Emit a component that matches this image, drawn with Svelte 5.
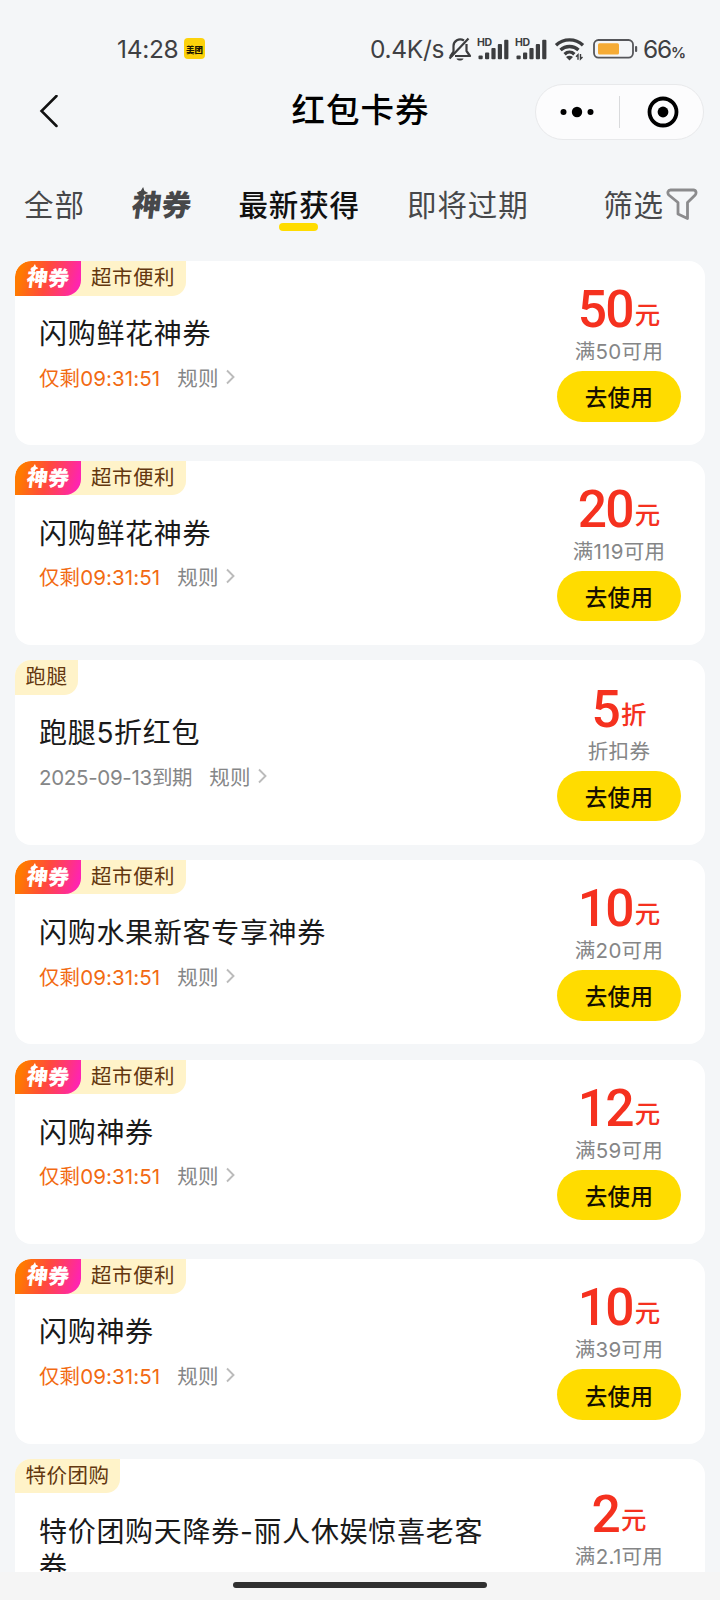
<script lang="ts">
  interface Coupon {
    tag: string;
    magic: boolean;
    title: string;
    expiry: string;
    urgent: boolean;
    amount: string;
    unit: string;
    condition: string;
  }

  const countdown = '仅剩09:31:51';

  const coupons: Coupon[] = [
    { tag: '超市便利', magic: true, title: '闪购鲜花神券', expiry: countdown, urgent: true, amount: '50', unit: '元', condition: '满50可用' },
    { tag: '超市便利', magic: true, title: '闪购鲜花神券', expiry: countdown, urgent: true, amount: '20', unit: '元', condition: '满119可用' },
    { tag: '跑腿', magic: false, title: '跑腿5折红包', expiry: '2025-09-13到期', urgent: false, amount: '5', unit: '折', condition: '折扣券' },
    { tag: '超市便利', magic: true, title: '闪购水果新客专享神券', expiry: countdown, urgent: true, amount: '10', unit: '元', condition: '满20可用' },
    { tag: '超市便利', magic: true, title: '闪购神券', expiry: countdown, urgent: true, amount: '12', unit: '元', condition: '满59可用' },
    { tag: '超市便利', magic: true, title: '闪购神券', expiry: countdown, urgent: true, amount: '10', unit: '元', condition: '满39可用' },
    { tag: '特价团购', magic: false, title: '特价团购天降券-丽人休娱惊喜老客券', expiry: '', urgent: false, amount: '2', unit: '元', condition: '满2.1可用' }
  ];
</script>

{#snippet magicLogo()}
  <span class="magic-logo">
    <svg class="magic-star" viewBox="0 0 10 10"><path d="M5 0 6.6 3.4 10 5 6.6 6.6 5 10 3.4 6.6 0 5 3.4 3.4Z" fill="currentColor" /></svg>
    <span class="magic-text">神券</span>
  </span>
{/snippet}

{#snippet signal()}
  <svg class="signal" width="33" height="24" viewBox="0 0 33 24">
    <text x="0" y="9" class="signal-hd">HD</text>
    <g fill="#3c3d3f">
      <rect x="1.5" y="18.5" width="4.2" height="3.8" rx="1" />
      <rect x="8" y="15.5" width="4.2" height="6.8" rx="1" />
      <rect x="14.4" y="11" width="4.2" height="11.3" rx="1" />
      <rect x="20.8" y="7" width="4.2" height="15.3" rx="1" />
      <rect x="27.2" y="2.8" width="4.2" height="19.5" rx="1" />
    </g>
  </svg>
{/snippet}

<div class="page">
  <header class="status-bar">
    <span class="clock">14:28</span>
    <span class="app-icon">美团</span>
    <div class="status-right">
      <span class="speed">0.4K/s</span>
      <svg class="bell" width="24" height="26" viewBox="0 0 24 26" fill="none" stroke="#3c3d3f" stroke-width="2.2">
        <path d="M16 4.5C11 1.5 5.5 5 5.5 10v5.5L2.5 20h2M18.5 8v7l3.5 5H7" stroke-linejoin="round" />
        <path d="M20.5 2.5 1.5 22.5" />
        <path d="M8.5 22.4h7c-.8 2.8-6.2 2.8-7 0Z" fill="#3c3d3f" stroke="none" />
      </svg>
      {@render signal()}
      {@render signal()}
      <svg class="wifi" width="31" height="24" viewBox="0 0 31 24" fill="none" stroke="#3c3d3f" stroke-width="3.3">
        <path d="M2 8.2C9.5 1 21.5 1 29 8.2" />
        <path d="M6.5 13C11.5 8.3 19.5 8.3 24.5 13" />
        <path d="M10.6 17.2C13.4 14.5 17.6 14.5 20.4 17.2" />
        <path d="M12 20c2-1.7 5-1.7 7 0l-3.5 3.5Z" fill="#3c3d3f" stroke="none" />
        <path d="M24 22.8v-5l-2 2M26.5 17v5l2-2" stroke-width="1.4" />
      </svg>
      <svg class="battery" width="46" height="20" viewBox="0 0 46 20">
        <rect x="1" y="1" width="39" height="17.6" rx="4.5" fill="none" stroke="#55565a" stroke-width="1.8" />
        <rect x="5" y="4.2" width="21" height="11.4" rx="1.5" fill="#f5ab35" />
        <rect x="42" y="7" width="2.2" height="6" rx="1" fill="#55565a" />
      </svg>
      <span class="percent">66<small>%</small></span>
    </div>
  </header>

  <nav class="nav-bar">
    <svg class="back" width="24" height="34" viewBox="0 0 24 34" fill="none" stroke="#111" stroke-width="2.5" stroke-linecap="round">
      <path d="M17.5 1 2.5 16 17.5 31" />
    </svg>
    <h1 class="nav-title">红包卡券</h1>
    <div class="capsule">
      <svg class="more" width="36" height="12" viewBox="0 0 36 12">
        <circle cx="4.5" cy="6" r="3" />
        <circle cx="18" cy="6" r="5.2" />
        <circle cx="31.5" cy="6" r="3" />
      </svg>
      <span class="capsule-line"></span>
      <svg class="close" width="32" height="32" viewBox="0 0 32 32">
        <circle cx="16" cy="16" r="13.5" fill="none" stroke="#000" stroke-width="3.8" />
        <circle cx="16" cy="16" r="5.4" />
      </svg>
    </div>
  </nav>

  <div class="tabs">
    <span class="tab">全部</span>
    <span class="tab tab-magic">{@render magicLogo()}</span>
    <span class="tab tab-active">最新获得</span>
    <span class="tab">即将过期</span>
    <span class="tab filter">
      筛选
      <svg width="32" height="33" viewBox="0 0 32 33" fill="none" stroke="#8b8b8d" stroke-width="2.8" stroke-linejoin="round">
        <path d="M4.5 2h23c2.6 0 3.2 3 1.7 5l-7.700 7.500v16L12 26V14.500L2.800 7C1 5 2 2 4.500 2Z" />
      </svg>
    </span>
  </div>

  <main class="coupon-list">
    {#each coupons as coupon}
      <article class="coupon">
        <div class="coupon-main">
          <div class="tag-row">
            {#if coupon.magic}
              <span class="magic-badge">{@render magicLogo()}</span>
            {/if}
            <span class="tag" class:tag-after={coupon.magic}>{coupon.tag}</span>
          </div>
          <h2 class="coupon-title">{coupon.title}</h2>
          <div class="coupon-meta">
            {#if coupon.expiry}
              <span class="expiry" class:expiry-urgent={coupon.urgent}>{coupon.expiry}</span>
              <span class="rule">规则</span>
              <svg width="10" height="16" viewBox="0 0 10 16" fill="none" stroke="#bbb" stroke-width="1.9">
                <path d="M1 1.5 7.5 8 1 14.5" />
              </svg>
            {/if}
          </div>
        </div>
        <div class="coupon-side">
          <div class="price"><span class="amount">{coupon.amount}</span><span class="unit">{coupon.unit}</span></div>
          <div class="condition">{coupon.condition}</div>
          {#if coupon.expiry}
            <button class="use-button">去使用</button>
          {:else}
            <span class="use-spacer"></span>
          {/if}
        </div>
      </article>
    {/each}
  </main>

  <footer class="home-area"><span class="home-bar"></span></footer>
</div>

<style>
  :global(body) {
    margin: 0;
    background: #f4f6f8;
  }

  .page {
    display: flex;
    flex-direction: column;
    width: 720px;
    height: 1600px;
    overflow: hidden;
    background: #f4f6f8;
    color: #1a1a1a;
    font-family: Inter, 'Noto Sans CJK SC', sans-serif;
    white-space: nowrap;
  }

  .status-bar {
    display: flex;
    align-items: center;
    flex: none;
    height: 83px;
    box-sizing: border-box;
    padding: 14px 0 0 117px;
    color: #3f4043;
    font-size: 24.5px;
  }

  .clock {
    width: 67px;
    letter-spacing: -0.3px;
  }

  .app-icon {
    display: flex;
    align-items: center;
    justify-content: center;
    width: 21px;
    height: 21px;
    border-radius: 4px;
    background: #fcd20b;
    color: #1a1500;
    font-size: 8.5px;
    font-weight: 900;
  }

  .status-right {
    display: flex;
    align-items: center;
    margin-left: 165px;
  }

  .speed {
    width: 78px;
    letter-spacing: -0.3px;
  }

  .bell {
    margin-right: 5px;
  }

  .signal {
    margin-right: 5px;
  }

  .signal-hd {
    fill: #3c3d3f;
    font-size: 10.5px;
    font-weight: 700;
    letter-spacing: -0.3px;
  }

  .wifi {
    margin: 0 8px 0 1px;
  }

  .battery {
    margin-right: 4px;
  }

  .percent {
    letter-spacing: -1.2px;
  }

  .percent small {
    font-size: 15px;
    font-weight: 600;
  }

  .nav-bar {
    display: grid;
    grid-template-columns: 169px 1fr 169px;
    align-items: center;
    flex: none;
    height: 57px;
    padding: 0 16px 0 15px;
  }

  .back {
    margin-left: 24px;
  }

  .nav-title {
    margin: 0 0 3px 2px;
    color: #000;
    font-size: 33.5px;
    font-weight: 500;
    line-height: 48px;
    letter-spacing: 1px;
    text-align: center;
  }

  .capsule {
    display: flex;
    align-items: center;
    height: 54px;
    border: 1px solid #e8e9eb;
    border-radius: 28px;
    background: #fcfcfd;
  }

  .more {
    margin-left: 23px;
  }

  .capsule-line {
    width: 1px;
    height: 32px;
    margin: 0 27px 0 24px;
    background: #d9dadc;
  }

  .tabs {
    display: flex;
    align-items: center;
    flex: none;
    height: 121px;
    box-sizing: border-box;
    padding: 8px 22px 0 24px;
    color: #47484a;
    font-size: 29.5px;
    letter-spacing: 0.9px;
  }

  .tab {
    position: relative;
    margin-right: 47px;
    line-height: 44px;
  }

  .tab-active {
    color: #111;
    font-weight: 500;
  }

  .tab-active::after {
    content: '';
    position: absolute;
    left: 41px;
    top: 40px;
    width: 39px;
    height: 8px;
    border-radius: 4px;
    background: #ffdc00;
  }

  .filter {
    display: flex;
    align-items: center;
    gap: 2px;
    margin: 0 0 0 auto;
  }

  .magic-logo {
    display: inline-block;
    position: relative;
    font-weight: 900;
    letter-spacing: 0.01em;
    transform: skewX(-7deg);
  }

  .magic-star {
    position: absolute;
    left: 0.1em;
    top: 0.14em;
    width: 0.4em;
    height: 0.4em;
  }

  .coupon-list {
    display: flex;
    flex-direction: column;
    flex: none;
    gap: 15.4px;
    height: 1311px;
    overflow: hidden;
    padding: 0 15.5px 0 15px;
  }

  .coupon {
    display: flex;
    flex: none;
    min-height: 184.27px;
    border-radius: 16px;
    overflow: hidden;
    background: #fff;
  }

  .coupon-main {
    flex: 1;
    min-width: 0;
  }

  .tag-row {
    display: flex;
    height: 34.5px;
  }

  .magic-badge {
    z-index: 1;
    width: 66px;
    border-radius: 16px 0 16px 0;
    background: linear-gradient(105deg, #ff7a00 12%, #ff4a3c 48%, #ff24b0 92%);
    color: #fff;
    font-size: 21px;
    line-height: 35px;
    text-align: center;
  }

  .tag {
    padding: 0 10.5px;
    border-radius: 0 0 14px 0;
    background: #fff3c9;
    color: #63370f;
    font-size: 20.5px;
    line-height: 34px;
    letter-spacing: 0.5px;
  }

  .tag-after {
    margin-left: -14px;
    padding: 0 11px 0 24px;
  }

  .coupon-title {
    width: 460px;
    margin: 21.5px 0 0 24px;
    font-size: 28px;
    font-weight: 400;
    line-height: 34.6px;
    letter-spacing: 0.7px;
    white-space: normal;
  }

  .coupon-meta {
    display: flex;
    align-items: center;
    height: 34px;
    margin: 8px 0 0 24px;
    padding-bottom: 31.5px;
    color: #858687;
    font-size: 20.5px;
    letter-spacing: -0.3px;
  }

  .expiry-urgent {
    color: #f26a12;
    letter-spacing: 0.1px;
  }

  .rule {
    margin: 0 7px 0 17px;
    letter-spacing: 0.2px;
  }

  .coupon-side {
    display: flex;
    flex-direction: column;
    align-items: center;
    justify-content: center;
    width: 124px;
    margin-right: 23.5px;
    padding-bottom: 1.4px;
  }

  .price {
    height: 46px;
    color: #f5311f;
    line-height: 53px;
  }

  .amount {
    font-family: Roboto, sans-serif;
    font-size: 51.5px;
    font-weight: 500;
    letter-spacing: -1.8px;
  }

  .unit {
    margin-left: 2px;
    font-size: 25.5px;
    font-weight: 500;
    line-height: 1;
    vertical-align: 3px;
  }

  .condition {
    height: 42px;
    color: #858687;
    font-size: 20.5px;
    line-height: 46px;
    letter-spacing: 0.3px;
  }

  .use-button,
  .use-spacer {
    width: 124px;
    height: 50.5px;
  }

  .use-button {
    padding: 0;
    border: 0;
    border-radius: 26px;
    background: #ffdc00;
    color: #160f00;
    font-family: inherit;
    font-size: 22.5px;
    font-weight: 500;
    letter-spacing: 0.3px;
  }

  .home-area {
    display: flex;
    justify-content: center;
    flex: 1;
    padding-top: 10px;
    background: #f5f5f5;
  }

  .home-bar {
    width: 254px;
    height: 6px;
    border-radius: 3px;
    background: #303030;
  }
</style>
